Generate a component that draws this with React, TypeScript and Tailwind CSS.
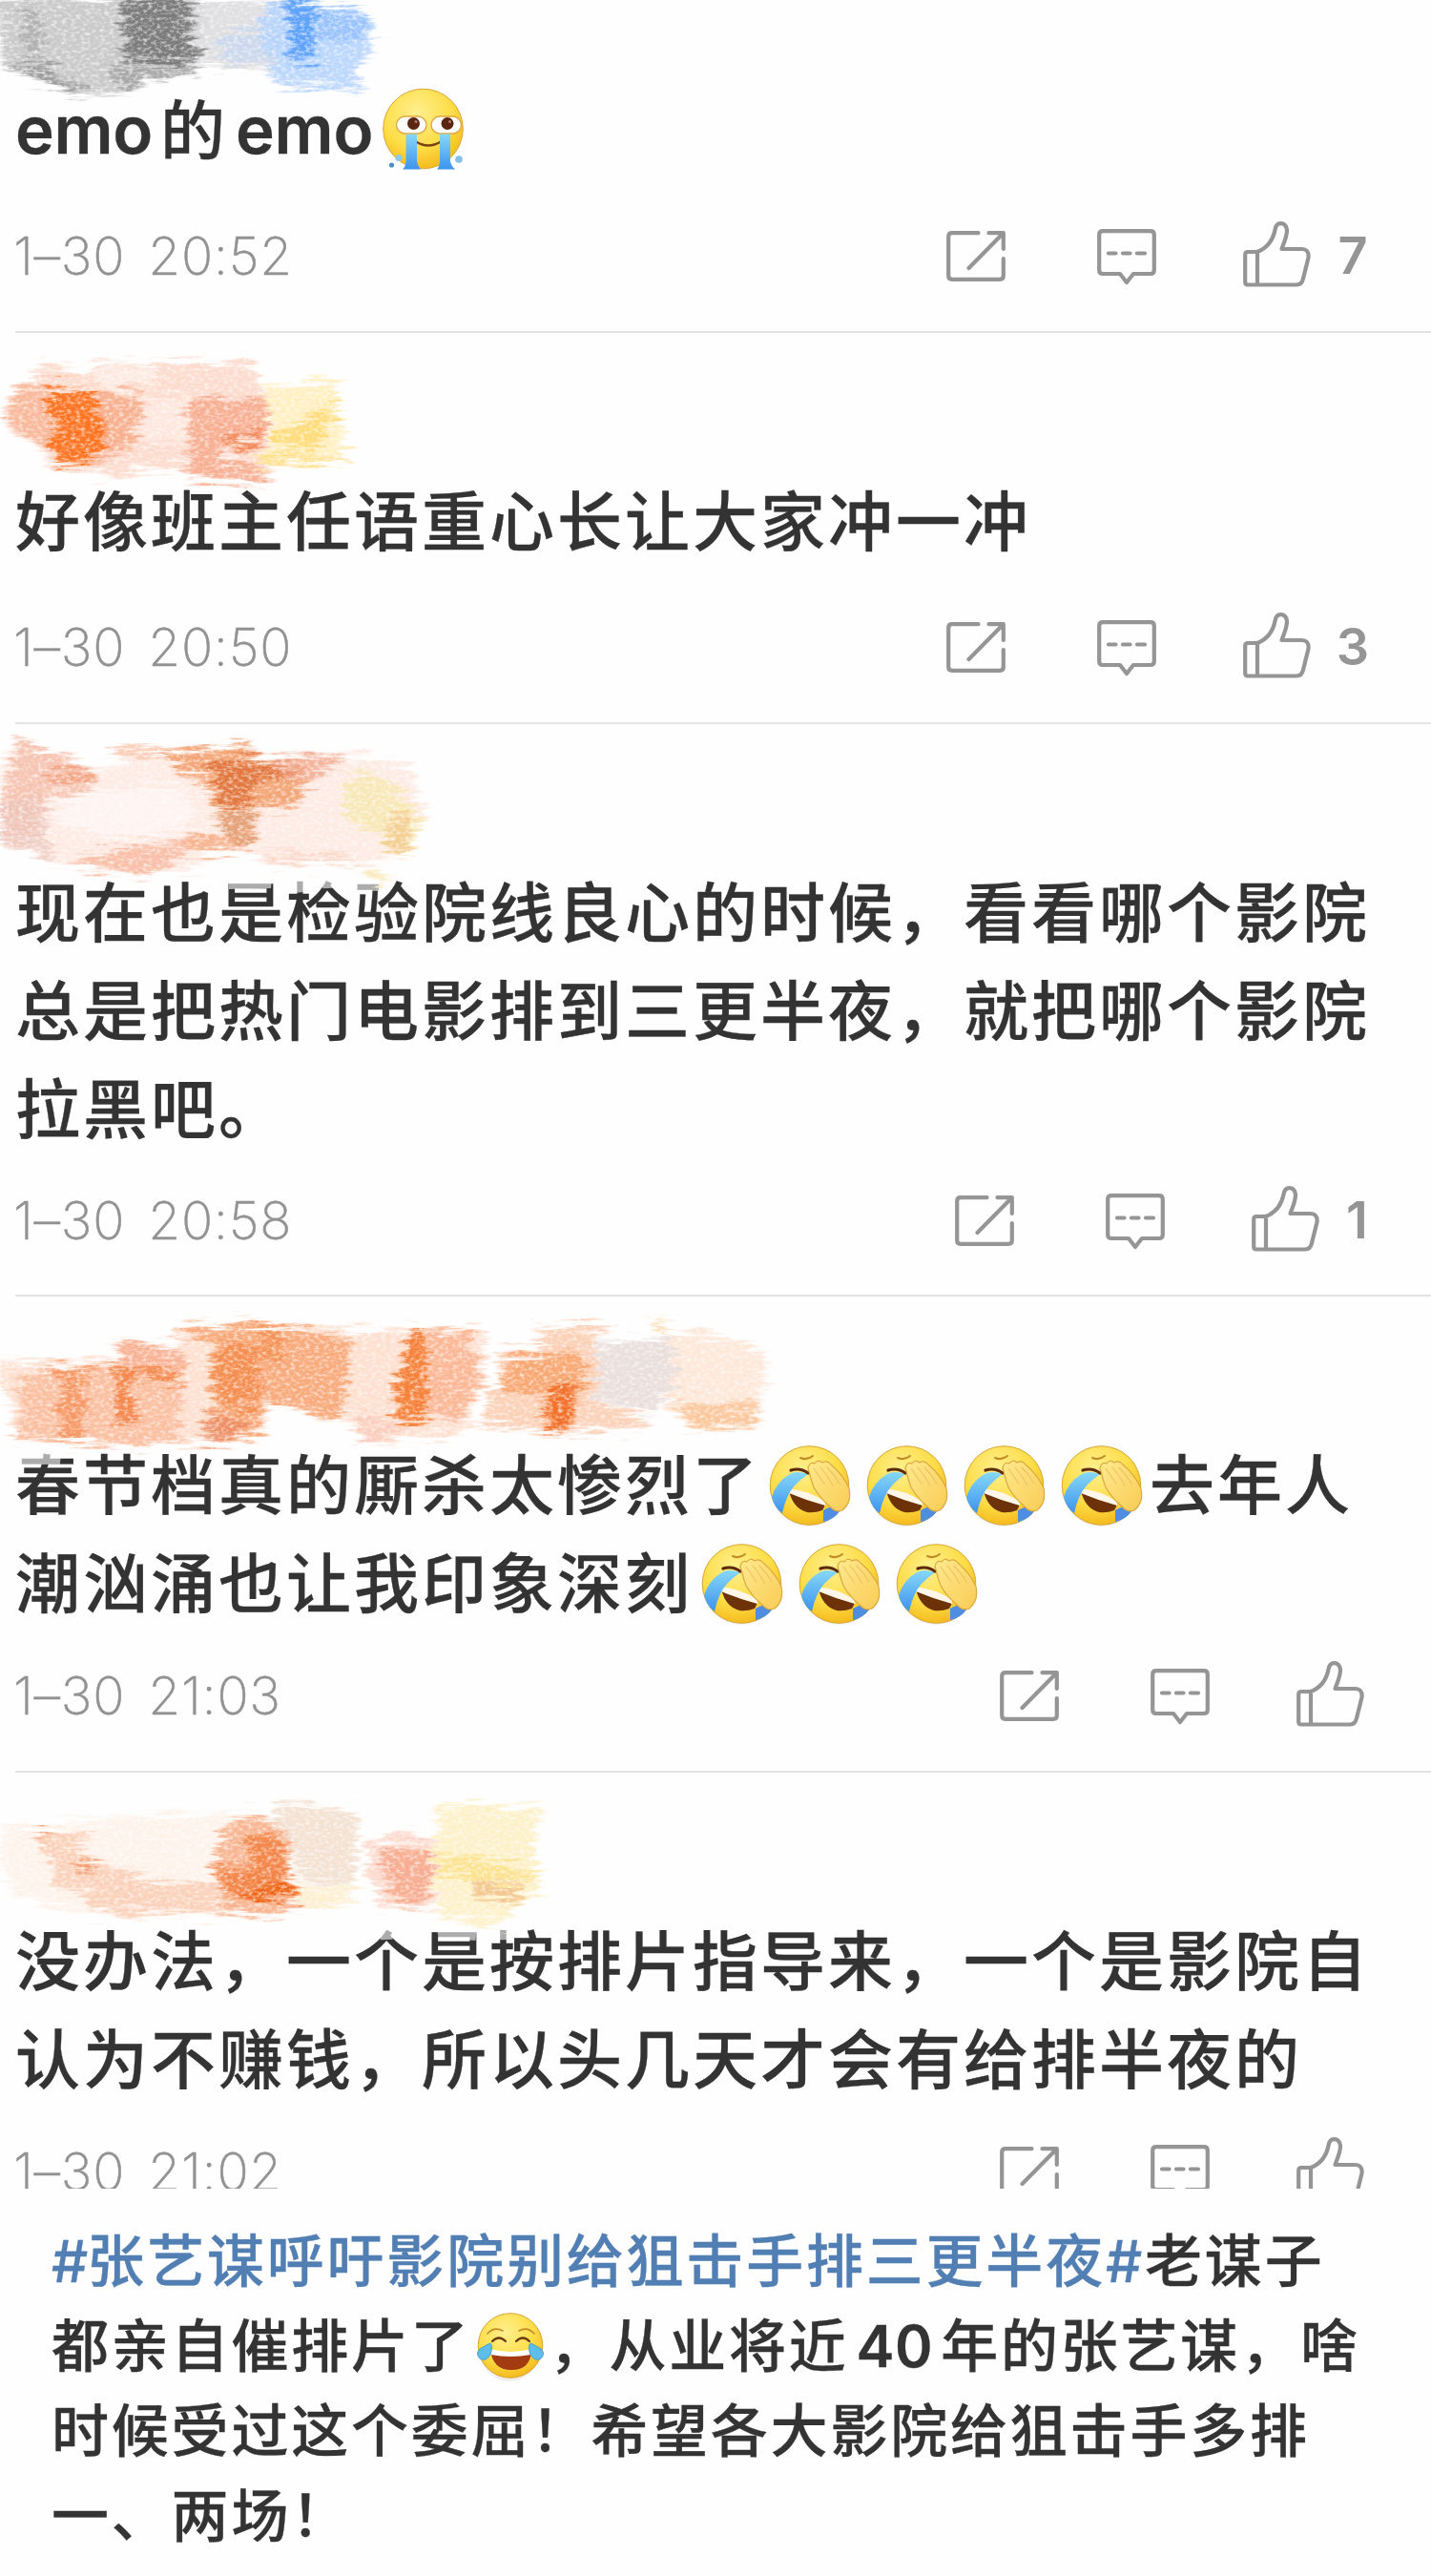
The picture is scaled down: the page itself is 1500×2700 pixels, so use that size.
import type { ReactNode } from 'react';

type Patch = { points: string; fill: string; opacity?: number };

// `wipes` are faint eraser marks that run over the text below the smudge
type SmudgeData = { transform: string; patches: Patch[]; wipes?: string[] };

const smudges: Record<string, SmudgeData> = {
  gray: {
    transform: 'scale(0.357 0.3333)',
    patches: [
      { points: '-20,-20 600,-20 590,150 560,180 580,225 430,240 400,290 330,280 240,292 130,245 10,200 0,100', fill: '#bdbdbd', opacity: 0.8 },
      { points: '370,-15 560,-15 560,110 580,180 420,190 350,170', fill: '#6f6f6f', opacity: 0.85 },
      { points: '60,20 110,20 130,160 70,170', fill: '#9a9a9a', opacity: 0.5 },
      { points: '20,195 140,200 250,270 240,292 130,250', fill: '#8a8a8a', opacity: 0.7 },
      { points: '320,200 580,205 580,225 420,235 400,285 330,240', fill: '#909090', opacity: 0.6 },
      { points: '560,-20 860,-15 800,215 580,200', fill: '#dcdcde', opacity: 0.9 },
      { points: '650,100 860,90 790,185 650,180', fill: '#c3d5f2', opacity: 0.7 },
      { points: '780,-5 1080,20 1100,150 1060,180 1050,240 1075,272 890,265 790,245 800,170 760,130', fill: '#b5d3fc', opacity: 0.9 },
      { points: '845,-5 920,-5 930,180 850,180', fill: '#5b9ffa', opacity: 0.95 },
      { points: '920,5 1080,25 1050,120 930,130', fill: '#8dbcfc', opacity: 0.7 },
    ],
  },
  ember: {
    transform: 'translate(0 1) scale(0.3333)',
    patches: [
      { points: '5,240 60,150 130,120 110,80 270,120 310,85 510,80 800,80 800,140 840,190 840,400 860,455 600,450 570,410 400,420 390,450 180,410 120,345 40,300', fill: '#fbcdb9', opacity: 0.7 },
      { points: '10,240 70,160 170,150 180,340 110,330', fill: '#f7a37c', opacity: 0.6 },
      { points: '300,170 440,180 450,290 400,350 300,400 290,250', fill: '#f59a70', opacity: 0.65 },
      { points: '150,155 300,180 305,240 330,300 290,400 190,395 155,330 185,270 150,250', fill: '#ff6a12', opacity: 0.9 },
      { points: '590,200 840,190 845,330 690,345 780,380 850,455 600,440', fill: '#f5946e', opacity: 0.6 },
      { points: '690,310 820,290 830,335 700,340', fill: '#ef7c45', opacity: 0.7 },
      { points: '460,190 590,170 580,330 450,330', fill: '#fff0ea', opacity: 0.6 },
      { points: '300,95 500,100 480,160 330,160', fill: '#fff6f2', opacity: 0.6 },
      { points: '690,360 770,360 770,390 690,390', fill: '#fff3ee', opacity: 0.9 },
      { points: '830,150 1060,140 1060,230 1090,300 1060,340 1095,385 960,400 780,405 860,330', fill: '#ffedb8', opacity: 0.85 },
      { points: '860,300 940,270 1050,200 1050,260 1000,350 860,348', fill: '#ffd668', opacity: 0.8 },
      { points: '800,370 1090,375 1090,390 800,405', fill: '#ffdb7d', opacity: 0.8 },
    ],
  },
  rust: {
    transform: 'translate(0 1) scale(0.3333)',
    patches: [
      { points: '0,110 40,40 90,50 290,125 380,120 360,60 800,60 820,95 1130,85 1300,130 1310,220 1350,250 1300,330 1280,400 1110,430 830,430 780,385 640,385 640,440 470,460 240,440 180,420 60,380 0,365', fill: '#fde8df', opacity: 0.85 },
      { points: '45,40 90,50 290,125 300,200 150,210 110,340 20,350 0,250 30,130', fill: '#f3b39c', opacity: 0.7 },
      { points: '0,250 120,200 150,330 180,410 60,375 0,360', fill: '#edc8bd', opacity: 0.7 },
      { points: '140,135 300,140 300,165 140,160', fill: '#f08a5b', opacity: 0.6 },
      { points: '360,65 540,60 530,85 365,85', fill: '#f9bd9f', opacity: 0.8 },
      { points: '525,65 800,60 800,110 950,130 950,240 790,250 690,250 630,170 540,120', fill: '#f29a66', opacity: 0.85 },
      { points: '650,105 920,110 930,150 810,165 780,245 700,245', fill: '#dc6a2d', opacity: 0.75 },
      { points: '860,85 1080,80 1060,130 950,180 880,130', fill: '#f0a284', opacity: 0.75 },
      { points: '690,255 800,260 800,340 740,370 700,330', fill: '#e0905f', opacity: 0.8 },
      { points: '560,360 610,330 800,350 750,385 630,385', fill: '#f5a67c', opacity: 0.8 },
      { points: '240,410 420,370 620,370 500,455 260,445', fill: '#f7ae90', opacity: 0.7 },
      { points: '190,220 560,170 620,280 540,330 300,340 170,290', fill: '#fffafa', opacity: 0.6 },
      { points: '1080,170 1160,130 1270,220 1330,290 1280,400 1210,380 1200,330 1090,280', fill: '#f7e7a4', opacity: 0.7 },
      { points: '1210,300 1280,260 1285,400 1220,380', fill: '#f3c98b', opacity: 0.8 },
      { points: '1130,450 1210,450 1200,500', fill: '#fae8b5', opacity: 0.9 },
      { points: '820,395 1110,395 1110,430 840,430', fill: '#fbd2bf', opacity: 0.7 },
    ],
    wipes: ['720,485 855,485 852,513 720,516', '925,485 955,485 955,525 925,528', '1010,485 1055,485 1050,512 1015,514', '1115,490 1190,490 1188,522 1118,518'],
  },
  coral: {
    transform: 'translate(0 1) scale(0.542 0.3333)',
    patches: [
      { points: '0,190 100,200 225,190 225,125 350,150 340,80 640,75 680,95 940,95 940,250 900,380 970,390 690,460 690,380 650,375 520,320 510,420 440,450 200,455 30,435 20,320 0,260', fill: '#fcd8c4', opacity: 0.8 },
      { points: '40,250 100,205 350,240 350,440 200,455 35,430', fill: '#f7a57c', opacity: 0.55 },
      { points: '225,125 355,150 355,200 235,200', fill: '#f6a888', opacity: 0.8 },
      { points: '205,205 355,205 355,262 260,240 260,390 225,390 225,240', fill: '#f27532', opacity: 0.75 },
      { points: '100,205 190,225 160,250 160,440 120,440 120,260', fill: '#f4813f', opacity: 0.6 },
      { points: '340,80 545,75 680,125 670,300 650,375 510,315 500,420 440,445 390,380 420,320 400,130', fill: '#f69a62', opacity: 0.75 },
      { points: '440,130 500,150 500,330 430,335 410,200', fill: '#f0762d', opacity: 0.55 },
      { points: '500,75 545,80 545,190 505,190', fill: '#f3853f', opacity: 0.6 },
      { points: '385,370 480,360 450,445 400,440', fill: '#e8855c', opacity: 0.7 },
      { points: '830,90 905,95 930,250 890,380 830,370', fill: '#f9ab84', opacity: 0.75 },
      { points: '795,90 825,95 830,385 775,380 755,310', fill: '#f5772a', opacity: 0.9 },
      { points: '690,370 780,380 780,420 690,460', fill: '#f9c4b4', opacity: 0.7 },
      { points: '1035,80 1180,85 1150,130 1150,320 1260,380 1240,395 1100,415 940,390 945,280 970,270 960,165 1050,160', fill: '#f9bd9a', opacity: 0.7 },
      { points: '980,180 1120,160 1130,240 1110,400 1050,400 1050,300 970,290', fill: '#f6924f', opacity: 0.65 },
      { points: '1060,280 1110,250 1110,340 1095,420 1055,390', fill: '#f1641a', opacity: 0.8 },
      { points: '1150,140 1290,120 1320,240 1270,350 1150,320', fill: '#e6d9d6', opacity: 0.85 },
      { points: '1265,50 1290,95 1410,120 1480,165 1475,290 1465,400 1340,400 1290,350 1310,240 1290,120', fill: '#fde4d2', opacity: 0.85 },
      { points: '1300,320 1460,330 1465,400 1340,400', fill: '#fbc190', opacity: 0.8 },
      { points: '1255,55 1280,55 1300,95 1270,95', fill: '#fbdcb0', opacity: 0.8 },
    ],
    wipes: ['40,492 118,492 116,524 40,526'],
  },
  amber: {
    transform: 'translate(0 12) scale(0.4147 0.3333)',
    patches: [
      { points: '10,120 90,130 300,95 600,90 720,100 720,150 760,350 840,385 720,385 710,405 220,400 110,360 30,330 0,230', fill: '#fef1e8', opacity: 0.85 },
      { points: '90,140 250,150 180,190 260,240 400,300 550,300 550,390 220,395 230,345 150,310 110,210', fill: '#f9c0a2', opacity: 0.65 },
      { points: '90,140 130,145 110,170', fill: '#ef8450', opacity: 0.9 },
      { points: '190,230 240,240 230,270 195,265', fill: '#ef8450', opacity: 0.7 },
      { points: '560,130 620,90 700,110 740,150 730,250 755,355 710,405 560,395 545,260', fill: '#f7a377', opacity: 0.75 },
      { points: '620,150 700,150 725,240 750,355 630,350 560,330 545,260 630,250', fill: '#f1722c', opacity: 0.7 },
      { points: '620,310 730,310 750,355 640,350', fill: '#ef5f0d', opacity: 0.8 },
      { points: '700,40 890,75 910,100 900,300 760,300 740,180 690,110', fill: '#f3dfce', opacity: 0.9 },
      { points: '750,310 900,310 890,350 840,385 750,370', fill: '#fdebc6', opacity: 0.8 },
      { points: '930,190 990,150 1100,160 1110,220 1100,380 960,380 930,260', fill: '#fbd0c0', opacity: 0.75 },
      { points: '960,195 1090,195 1100,310 1070,370 1010,360 970,280', fill: '#f49570', opacity: 0.65 },
      { points: '1115,55 1365,65 1350,170 1365,330 1310,360 1280,435 1110,410 1100,200', fill: '#fdf0c4', opacity: 0.9 },
      { points: '1105,225 1200,220 1350,260 1360,290 1210,295 1110,275', fill: '#fce28a', opacity: 0.85 },
      { points: '1190,295 1310,300 1310,360 1200,340', fill: '#f2c184', opacity: 0.85 },
    ],
    wipes: ['955,455 1000,455 992,488 962,490', '1105,458 1205,458 1202,492 1108,482', '1260,455 1284,455 1282,490 1260,490'],
  },
};

const Smudge = ({ name, className }: { name: string; className: string }) => {
  const { transform, patches, wipes = [] } = smudges[name];
  return (
    <svg className={`relative z-10 block w-[860px] overflow-visible ${className}`}>
      <g filter="url(#crayon)">
        <g transform={transform}>
          {patches.map((p, i) => (
            <polygon key={i} points={p.points} fill={p.fill} opacity={p.opacity ?? 1} />
          ))}
        </g>
      </g>
      <g transform={transform}>
        {wipes.map((points) => (
          <polygon key={points} points={points} fill="#fefefe" opacity={0.6} />
        ))}
      </g>
    </svg>
  );
};

// Shared gradients and the rough crayon texture
const Defs = () => (
  <svg className="absolute h-0 w-0" aria-hidden="true">
    <defs>
      <filter id="crayon" x="-5%" y="-15%" width="110%" height="130%" colorInterpolationFilters="sRGB">
        <feGaussianBlur in="SourceGraphic" stdDeviation="2.8" result="soft" />
        <feTurbulence type="fractalNoise" baseFrequency="0.025 0.2" numOctaves="4" seed="4" result="streak" />
        <feDisplacementMap in="soft" in2="streak" scale="34" xChannelSelector="R" yChannelSelector="G" result="rough" />
        <feOffset in="rough" dy="3" result="shifted" />
        <feTurbulence type="fractalNoise" baseFrequency="0.2 0.32" numOctaves="4" seed="9" result="grain" />
        <feColorMatrix in="grain" type="matrix" values="0 0 0 0 0  0 0 0 0 0  0 0 0 0 0  1.7 0 0 0 0.06" result="mask" />
        <feComposite in="shifted" in2="mask" operator="in" />
      </filter>
      <radialGradient id="face" cx="0.42" cy="0.3" r="0.75">
        <stop offset="0" stopColor="#fff08f" />
        <stop offset="0.6" stopColor="#fddc45" />
        <stop offset="1" stopColor="#f3b518" />
      </radialGradient>
      <linearGradient id="tear" x1="0" y1="0" x2="0" y2="1">
        <stop offset="0" stopColor="#86d8f8" />
        <stop offset="1" stopColor="#3d93ee" />
      </linearGradient>
      <linearGradient id="palm" x1="0" y1="0" x2="1" y2="1">
        <stop offset="0" stopColor="#ffe98e" />
        <stop offset="1" stopColor="#f9cc55" />
      </linearGradient>
    </defs>
  </svg>
);

const Crying = () => (
  <svg viewBox="0 0 100 100" className="h-[100px] w-[100px] shrink-0">
    <circle cx="47.5" cy="48" r="41.8" fill="url(#face)" stroke="#d9a532" strokeWidth="1" />
    <rect x="19.5" y="35" width="31.5" height="18" rx="9" fill="#fff" stroke="#e0a640" strokeWidth="1.4" />
    <rect x="56" y="35" width="31.5" height="18" rx="9" fill="#fff" stroke="#e0a640" strokeWidth="1.4" />
    <circle cx="37.5" cy="42.5" r="6.5" fill="#5b2413" />
    <circle cx="73" cy="42.5" r="6.5" fill="#5b2413" />
    <circle cx="40" cy="40.5" r="1.5" fill="#a9796a" />
    <circle cx="75.5" cy="40.5" r="1.5" fill="#a9796a" />
    <path d="M40 61.5Q53 69.5 66 61.5" fill="none" stroke="#7a4210" strokeWidth="2.6" strokeLinecap="round" />
    <path d="M29.5 53.5H41V82Q42 87 45 90.5H26Q29.5 87 29.5 82Z" fill="url(#tear)" />
    <path d="M65 53.5H76V82Q77 87 81 90.5H62Q65 87 65 82Z" fill="url(#tear)" />
    <circle cx="14.5" cy="86" r="2.6" fill="#4d8ecb" />
    <circle cx="22" cy="78.5" r="3.6" fill="#8fc8ea" />
    <circle cx="85" cy="80" r="3.8" fill="#86bfe8" />
  </svg>
);

const Facepalm = () => (
  <svg viewBox="0 0 100 100" className="-mr-1 h-[100px] w-[106px] shrink-0">
    <ellipse cx="48" cy="53" rx="40" ry="40" fill="#000" opacity="0.06" />
    <circle cx="48.5" cy="50" r="41.3" fill="url(#face)" stroke="#d9a532" strokeWidth="1" />
    <path d="M63 76Q74 70 77 72L81 76Q74 86 63 88Z" fill="#4f8de0" />
    <path d="M27 55Q46 62 64 66Q66 70 62 76Q54 79 46 78Q31 74 27 55Z" fill="#6e3208" />
    <path d="M28 53.5Q46 55 65 66.5L65 71Q46 66 27 58Z" fill="#fff6ea" />
    <path d="M47 38Q35 34 28 38Q14 46 9 62Q12 74 20 79Q24 60 33 50Q40 43 47 38Z" fill="url(#tear)" />
    <path d="M29 34Q39 31 47 37" fill="none" stroke="#5d2a0c" strokeWidth="3.2" strokeLinecap="round" />
    <path d="M39 21Q46 24 52 19" fill="none" stroke="#c18b25" strokeWidth="2" strokeLinecap="round" />
    <path d="M48 29Q50 25 54 27Q57 22 62 26Q67 23 71 28Q84 39 90 53Q93 68 83 76Q76 79 70 72Q60 64 53 52Q50 44 48 35Q46 32 48 29Z" fill="url(#palm)" stroke="#dba940" strokeWidth="1.2" />
    <path d="M53 32Q59 41 64 48M60 31Q68 40 73 50M67 31Q75 39 80 48" fill="none" stroke="#edc266" strokeWidth="1.1" strokeLinecap="round" />
  </svg>
);

const Joy = () => (
  <svg viewBox="0 0 82 82" className="h-[82px] w-[82px] shrink-0">
    <ellipse cx="40" cy="44" rx="32" ry="34" fill="#000" opacity="0.06" />
    <circle cx="41" cy="40.5" r="33.8" fill="url(#face)" stroke="#d9a532" strokeWidth="1" />
    <path d="M17 28Q24 20 33 25M50 25Q59 20 66 28" fill="none" stroke="#c68a26" strokeWidth="1.6" strokeLinecap="round" />
    <path d="M22 36Q29 29 36 36M47 36Q54 29 61 36" fill="none" stroke="#6b3a10" strokeWidth="2.2" strokeLinecap="round" />
    <path d="M20 44Q41 52 63 44Q63 66 42 66Q22 66 20 44Z" fill="#a23a12" />
    <path d="M20 44Q41 50 63 44L62.5 50Q41 54 20.5 50Z" fill="#fff" />
    <path d="M20 38Q23 41 20 50Q15 58 9 54Q4 49 9 44Q15 40 20 38Z" fill="#5fbdea" stroke="#4aa0d4" strokeWidth="1" />
    <path d="M62 38Q59 41 62 50Q67 58 73 54Q78 49 73 44Q67 40 62 38Z" fill="#5fbdea" stroke="#4aa0d4" strokeWidth="1" />
  </svg>
);

const ShareIcon = () => (
  <svg viewBox="0 0 62 53" className="h-[53px] w-[62px]" fill="none" stroke="currentColor" strokeWidth="4.2" strokeLinecap="round" strokeLinejoin="round">
    <path d="M33.5 2.2H6Q2.2 2.2 2.2 6V47Q2.2 50.8 6 50.8H56Q59.8 50.8 59.8 47V29" />
    <path d="M44.5 2.2H59.8V19M59 3L23.5 39" />
  </svg>
);

const CommentIcon = () => (
  <svg viewBox="0 0 62 60" className="h-[60px] w-[62px]" fill="none" stroke="currentColor" strokeWidth="4.2" strokeLinecap="round" strokeLinejoin="round">
    <path d="M6 2.2H56Q59.8 2.2 59.8 6V43Q59.8 47 56 47H38L31 56L24 47H6Q2.2 47 2.2 43V6Q2.2 2.2 6 2.2Z" />
    <path d="M12 25.5H19.5M27 25.5H34.5M42 25.5H50" />
  </svg>
);

const LikeIcon = () => (
  <svg viewBox="0 0 71 70" className="h-[70px] w-[71px]" fill="none" stroke="currentColor" strokeWidth="4.2" strokeLinecap="round" strokeLinejoin="round">
    <path d="M15 32H5Q2.2 32 2.2 35V63.5Q2.2 66.5 5 66.5H56Q61.5 66.5 63 60L68.500 38Q69.500 29 61 29H40.500C42 24 46 17 46 9Q45 2.200 39.500 2.200Q34.500 2.200 33.500 9Q30 26 15 32ZM15 32V66" />
  </svg>
);

type Comment = {
  smudge: string;
  headerClass: string;
  lines: ReactNode[];
  time: string;
  likes?: number;
  likesClass?: string;
  metaClass: string;
};

const Actions = ({ likes, likesClass }: { likes?: number; likesClass?: string }) => (
  <div className="flex items-center text-[#959595]">
    <ShareIcon />
    <div className="ml-24 pt-[3px]"><CommentIcon /></div>
    <div className="ml-[91px] pb-[2px]"><LikeIcon /></div>
    {likes !== undefined ? (
      <span className={`ml-[29px] flex justify-center font-['Inter','Noto_Sans_CJK_SC',sans-serif] text-[54px] leading-none font-semibold ${likesClass}`}>{likes}</span>
    ) : (
      <span className="w-[3px]" />
    )}
  </div>
);

const comments: Comment[] = [
  {
    smudge: 'gray',
    headerClass: 'h-[85px]',
    lines: [
      <>
        <span className="mr-[8px] text-[69px] font-semibold tracking-[-0.3px]">emo</span>的
        <span className="ml-[8px] text-[69px] font-semibold tracking-[-0.3px]">emo</span>
        <span className="ml-[5px]"><Crying /></span>
      </>,
    ],
    time: '1–30 20:52',
    likes: 7,
    likesClass: 'w-[30px]',
    metaClass: 'mt-10 mb-[39px]',
  },
  {
    smudge: 'ember',
    headerClass: 'h-[146px]',
    lines: ['好像班主任语重心长让大家冲一冲'],
    time: '1–30 20:50',
    likes: 3,
    likesClass: 'w-[30px]',
    metaClass: 'mt-10 mb-[39px]',
  },
  {
    smudge: 'rust',
    headerClass: 'h-[146px]',
    lines: [
      '现在也是检验院线良心的时候，看看哪个影院',
      '总是把热门电影排到三更半夜，就把哪个影院',
      '拉黑吧。',
    ],
    time: '1–30 20:58',
    likes: 1,
    likesClass: 'w-[21px]',
    metaClass: 'mt-[25px] mb-[38px]',
  },
  {
    smudge: 'coral',
    headerClass: 'h-[146px]',
    lines: [
      <>春节档真的厮杀太惨烈了<Facepalm /><Facepalm /><Facepalm /><Facepalm />去年人</>,
      <>潮汹涌也让我印象深刻<Facepalm /><Facepalm /><Facepalm /></>,
    ],
    time: '1–30 21:03',
    metaClass: 'mt-[26px] mb-[39px]',
  },
  {
    smudge: 'amber',
    headerClass: 'h-[146px]',
    lines: [
      '没办法，一个是按排片指导来，一个是影院自',
      '认为不赚钱，所以头几天才会有给排半夜的',
    ],
    time: '1–30 21:02',
    metaClass: 'mt-[26px]',
  },
];

const CommentItem = ({ comment, last }: { comment: Comment; last: boolean }) => (
  <article>
    <Smudge name={comment.smudge} className={comment.headerClass} />
    <div className="pl-4 text-[68px] font-medium tracking-[3px] text-[#333] [-webkit-text-stroke:0.3px_#333]">
      {comment.lines.map((line, i) => (
        <div key={i} className="flex h-[103px] items-center leading-none whitespace-nowrap">{line}</div>
      ))}
    </div>
    <div className={`flex h-20 items-center justify-between pr-[67px] pl-[14px] ${comment.metaClass}`}>
      <time className="font-['Inter','Noto_Sans_CJK_SC',sans-serif] text-[55px] leading-none font-extralight tracking-[0.7px] text-[#929292] [-webkit-text-stroke:0.5px_#929292] [word-spacing:8px]">{comment.time}</time>
      <Actions likes={comment.likes} likesClass={comment.likesClass} />
    </div>
    {!last && <div className="ml-4 h-[2px] bg-[#e3e3e3]" />}
  </article>
);

const App = () => {
  return (
    <div className="h-[2700px] w-[1500px] overflow-hidden bg-[#fefefe] font-['Inter','Noto_Sans_CJK_SC',sans-serif]">
      <Defs />

      <main className="h-[2294px] overflow-hidden">
        {comments.map((c, i) => (
          <CommentItem key={c.time} comment={c} last={i === comments.length - 1} />
        ))}
      </main>

      <section className="mt-[31px] pl-[54px] text-[60px] font-medium tracking-[2.8px] text-[#333] [-webkit-text-stroke:0.3px]">
        <p className="flex h-[89px] items-center leading-none whitespace-nowrap">
          <span className="text-[#527fb3]">
            <span className="tracking-[-1px]">#</span>张艺谋呼吁影院别给狙击手排三更半夜#
          </span>
          老谋子
        </p>
        <p className="flex h-[89px] items-center leading-none whitespace-nowrap">
          都亲自催排片了<Joy />，从业将近
          <span className="mx-2 font-semibold tracking-[0.5px]">40</span>
          年的张艺谋，啥
        </p>
        <p className="flex h-[89px] items-center leading-none whitespace-nowrap">时候受过这个委屈！希望各大影院给狙击手多排</p>
        <p className="flex h-[89px] items-center leading-none whitespace-nowrap">一、两场！</p>
      </section>
    </div>
  );
};

export default App;
